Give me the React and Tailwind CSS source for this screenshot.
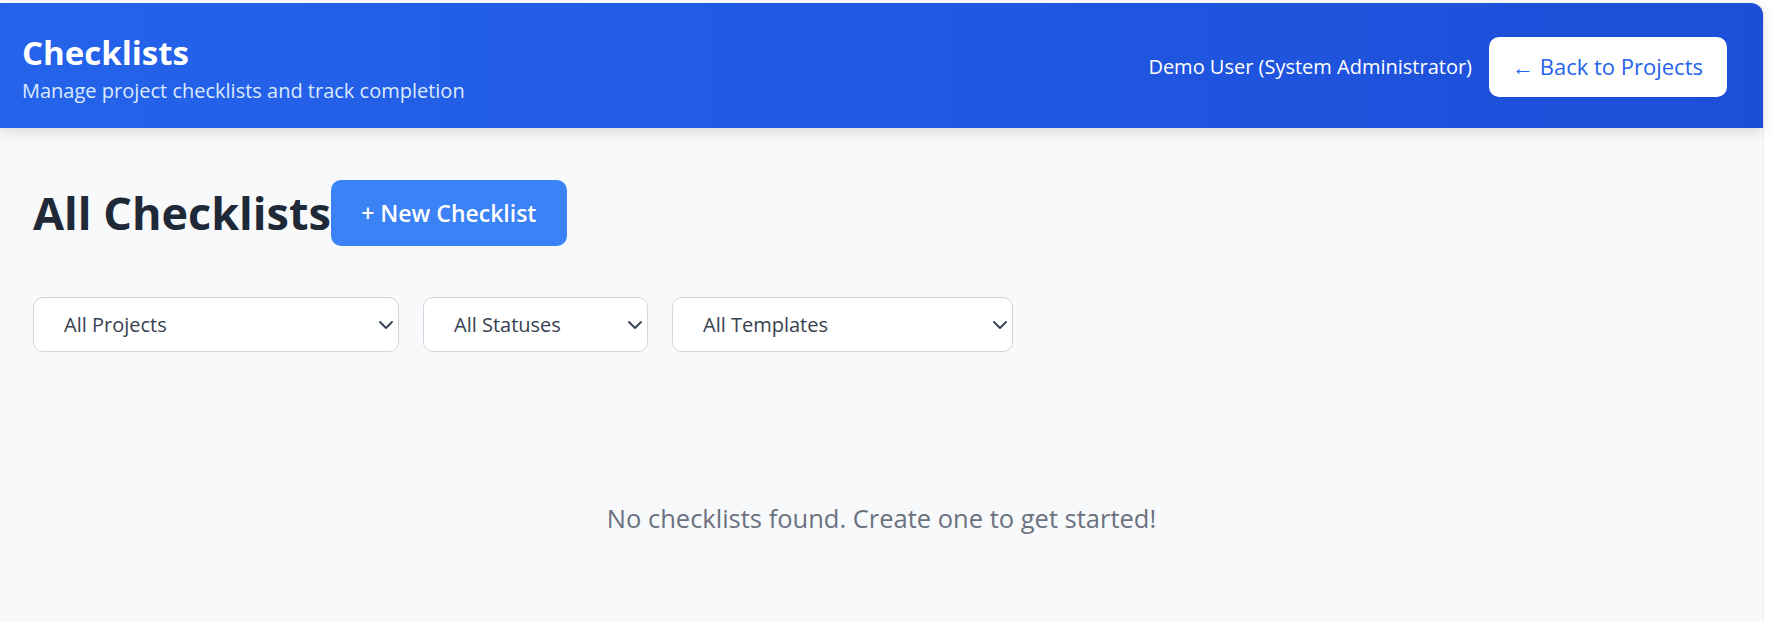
import { ChevronDown } from 'lucide-react'

const FILTERS = [
  { label: 'All Projects', width: 'w-[366px]' },
  { label: 'All Statuses', width: 'w-[225px]' },
  { label: 'All Templates', width: 'w-[341px]' },
]

function FilterSelect({ label, width }) {
  return (
    <div className={`relative ${width}`}>
      <select
        defaultValue={label}
        className="h-[55px] w-full appearance-none rounded-[10px] border border-[#d1d5db] bg-white pl-[30px] pr-8 text-[20px] text-[#374151] outline-none"
      >
        <option>{label}</option>
      </select>
      <ChevronDown
        className="pointer-events-none absolute right-[1px] top-1/2 h-6 w-6 -translate-y-1/2 text-[#374151]"
        strokeWidth={1.9}
      />
    </div>
  )
}

export default function App() {
  return (
    <div className="min-h-screen bg-white pt-[3px] font-['Open_Sans',sans-serif]">
      <div className="min-h-[619px] w-[1764px] rounded-tr-xl border-r border-[#eceef1] bg-[#f8f9fb]">
        {/* Header */}
        <header className="relative z-10 flex h-[125px] items-center justify-between rounded-tr-xl bg-linear-to-r from-[#2563eb] to-[#1d4ed8] pl-[22px] pr-9 pt-[6px] shadow-[0_4px_14px_rgba(0,0,0,0.12)]">
          <div>
            <h1 className="text-[33px] font-bold leading-10 text-white">Checklists</h1>
            <p className="mt-[4px] text-[20px] leading-7 text-[#dbeafe]">
              Manage project checklists and track completion
            </p>
          </div>
          <div className="-mt-[4px] flex items-center gap-[17px]">
            <span className="text-[20px] text-white">Demo User (System Administrator)</span>
            <button className="h-[60px] rounded-[10px] bg-white pl-[23px] pr-6 text-[22px] text-[#2563eb]">
              ← Back to Projects
            </button>
          </div>
        </header>

        <main className="px-[33px] pt-[52px]">
          <div className="flex items-center">
            <h2 className="text-[45px] font-bold leading-[66px] text-[#1f2937]">All Checklists</h2>
            <button className="h-[66px] w-[236px] rounded-[10px] bg-[#3b82f6] text-[23px] font-semibold text-white">
              + New Checklist
            </button>
          </div>

          <div className="mt-[51px] flex gap-[24px]">
            {FILTERS.map((f) => (
              <FilterSelect key={f.label} label={f.label} width={f.width} />
            ))}
          </div>

          <p className="mt-[150px] text-center text-[25.5px] leading-8 text-[#6b7280]">
            No checklists found. Create one to get started!
          </p>
        </main>
      </div>
    </div>
  )
}
